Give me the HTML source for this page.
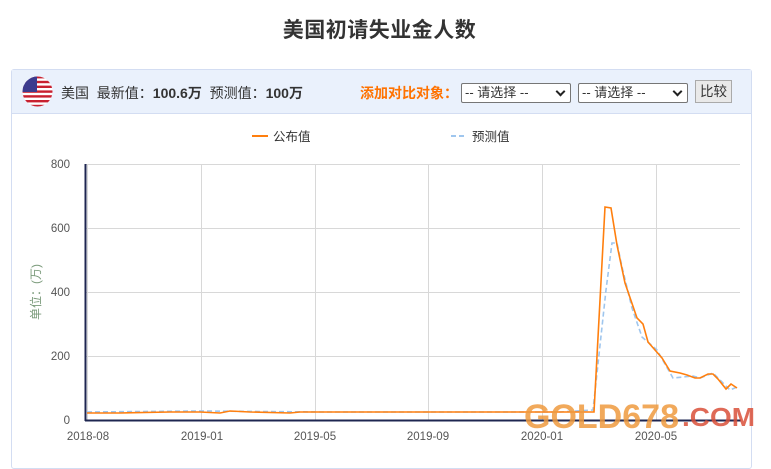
<!DOCTYPE html>
<html><head><meta charset="utf-8"><style>
*{margin:0;padding:0;box-sizing:border-box}
body{width:771px;height:451px;background:#fff;font-family:"Liberation Sans","Noto Sans CJK SC",sans-serif;position:relative;overflow:hidden;color:#333}
.title{position:absolute;top:14px;left:-6px;width:771px;text-align:center;font-size:21px;font-weight:bold;color:#333;letter-spacing:0.5px}
.panel{position:absolute;left:11px;top:69px;width:741px;height:400px;border:1px solid #d3ddf2;border-radius:3px}
.head{position:absolute;left:0;top:0;width:739px;height:44px;background:#eaf1fc;border-bottom:1px solid #d3ddf2}
.ht{position:absolute;top:13px;font-size:14px;color:#333;white-space:nowrap}
.ht b{font-weight:bold}
.sel{position:absolute;top:13px;height:20px;border:1px solid #767676;background:#fff;font-size:13px;padding-left:3px;line-height:18px;border-radius:2px}
.sel:after{content:"";position:absolute;right:6px;top:4px;width:5px;height:5px;border-right:2px solid #222;border-bottom:2px solid #222;transform:rotate(45deg)}
.btn{position:absolute;left:683px;top:10px;width:37px;height:23px;background:#e9e9e9;border:1px solid #aaa;font-size:13.5px;text-align:center;line-height:21px}
</style></head><body>
<div class="title">美国初请失业金人数</div>
<div class="panel">
<div class="head">
<svg style="position:absolute;left:10px;top:6px" width="31" height="31" viewBox="0 0 31 31"><defs><clipPath id="c"><circle cx="15.5" cy="15.5" r="15"/></clipPath></defs><g clip-path="url(#c)"><rect width="31" height="31" fill="#fff"/><g fill="#c8202f"><rect y="0" width="31" height="2.4"/><rect y="4.8" width="31" height="2.4"/><rect y="9.6" width="31" height="2.4"/><rect y="14.4" width="31" height="2.4"/><rect y="19.2" width="31" height="2.4"/><rect y="24" width="31" height="2.4"/><rect y="28.8" width="31" height="2.4"/></g><rect width="15" height="16" fill="#3c3b8e"/></g></svg>
<div class="ht" style="left:49px">美国&nbsp;&nbsp;最新值：<b>100.6万</b>&nbsp;&nbsp;预测值：<b>100万</b></div>
<div class="ht" style="left:348px;color:#ff7200;font-weight:bold">添加对比对象：</div>
<div class="sel" style="left:449px;width:110px">-- 请选择 --</div>
<div class="sel" style="left:566px;width:110px">-- 请选择 --</div>
<div class="btn">比较</div>
</div>
</div>
<svg style="position:absolute;left:0;top:0" width="771" height="451">
<g stroke="#ff7f0e" stroke-width="2"><line x1="252" y1="136" x2="268" y2="136"/></g>
<text x="273" y="141" font-size="12.5" fill="#333" font-family="Liberation Sans,Noto Sans CJK SC,sans-serif">公布值</text>
<line x1="451" y1="136" x2="467" y2="136" stroke="#9fc6ee" stroke-width="2" stroke-dasharray="5,3"/>
<text x="472" y="141" font-size="12.5" fill="#333" font-family="Liberation Sans,Noto Sans CJK SC,sans-serif">预测值</text>
<g stroke="#d8d8d8" stroke-width="1">
<line x1="86" y1="164.5" x2="740" y2="164.5"/><line x1="86" y1="228.5" x2="740" y2="228.5"/><line x1="86" y1="292.5" x2="740" y2="292.5"/><line x1="86" y1="356.5" x2="740" y2="356.5"/>
<line x1="87.5" y1="164" x2="87.5" y2="420"/><line x1="201.5" y1="164" x2="201.5" y2="420"/><line x1="315.5" y1="164" x2="315.5" y2="420"/><line x1="428.5" y1="164" x2="428.5" y2="420"/><line x1="542.5" y1="164" x2="542.5" y2="420"/><line x1="656.5" y1="164" x2="656.5" y2="420"/>
</g>
<g font-size="11.5" fill="#555" font-family="Liberation Sans,sans-serif" text-anchor="end">
<text x="70" y="168">800</text><text x="70" y="232">600</text><text x="70" y="296">400</text><text x="70" y="360">200</text><text x="70" y="424">0</text></g>
<g font-size="11.5" fill="#555" font-family="Liberation Sans,sans-serif" text-anchor="middle">
<text x="88" y="440">2018-08</text><text x="202" y="440">2019-01</text><text x="315" y="440">2019-05</text><text x="428" y="440">2019-09</text><text x="542" y="440">2020-01</text><text x="656" y="440">2020-05</text></g>
<text transform="translate(40,292) rotate(-90)" text-anchor="middle" font-size="12" fill="#7a9a7a" font-family="Liberation Sans,Noto Sans CJK SC,sans-serif">单位：(万)</text>
<polyline fill="none" stroke="#9fc6ee" stroke-width="1.6" stroke-dasharray="5,3" points="87,412 200,411 320,412 440,412 560,412 593,410 606,290 612,243 617,243 622,267 632,308 642,337 657,350 673,378 693,376 700,378 713,373 723,383 730,390 737,387"/>
<polyline fill="none" stroke="#ff7f0e" stroke-width="1.6" points="87,413 120,413 170,412 200,412 220,413 230,411 250,412 290,413 300,412 350,412 420,412 480,412 520,412 560,412 594,412 605,207 611,208 617,245 625,283 637,318 643,324 648,342 662,358 670,371 680,373 687,375 695,378 700,378 708,374 713,374 718,379 726,389 731,384 737,388"/>
<line x1="85.5" y1="164" x2="85.5" y2="421" stroke="#1e2650" stroke-width="2"/>
<line x1="85" y1="420.5" x2="741" y2="420.5" stroke="#1e2650" stroke-width="2"/>
<text x="524" y="428" font-size="34" font-weight="bold" fill="#ef9a3e" fill-opacity="0.85" font-family="Liberation Sans,sans-serif" textLength="155" lengthAdjust="spacingAndGlyphs">GOLD678</text>
<text x="682" y="426" font-size="26" font-weight="bold" fill="#d9503a" fill-opacity="0.85" font-family="Liberation Sans,sans-serif" textLength="73" lengthAdjust="spacingAndGlyphs">.COM</text>
</svg>
</body></html>
